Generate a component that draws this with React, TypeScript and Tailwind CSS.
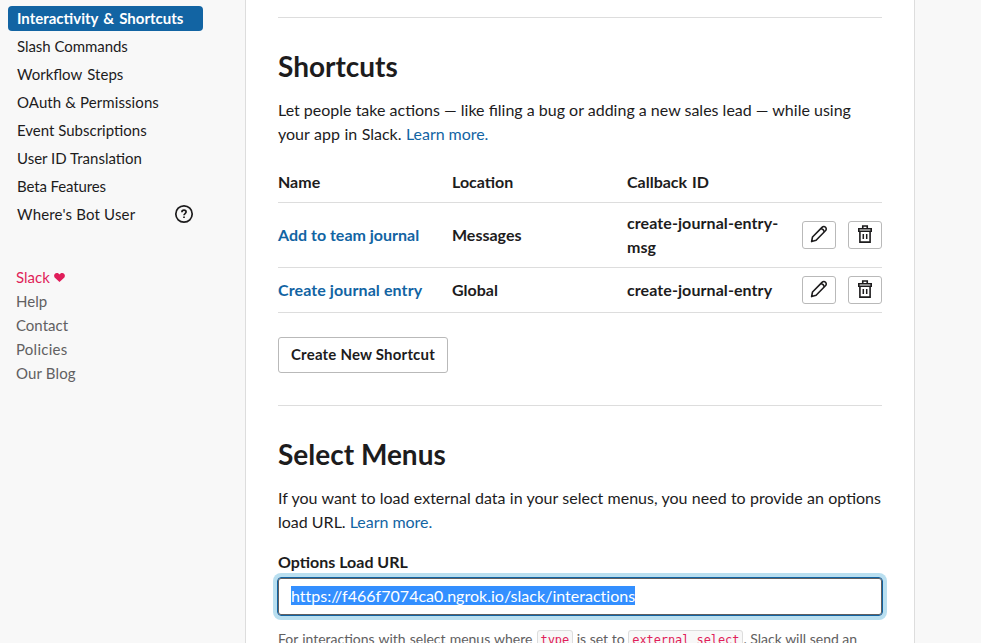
import type { ReactNode } from 'react';

const navItems = [
  { label: 'Slash Commands', style: 'tracking-[-0.05px]' },
  { label: 'Workflow Steps', style: '[word-spacing:1.5px]' },
  { label: 'OAuth & Permissions', style: 'tracking-[0.1px]' },
  { label: 'Event Subscriptions', style: '' },
  { label: 'User ID Translation', style: '' },
  { label: 'Beta Features', style: 'tracking-[-0.12px]' },
];

const footerLinks = [
  { label: 'Help', style: '' },
  { label: 'Contact', style: '' },
  { label: 'Policies', style: 'tracking-[0.25px]' },
  { label: 'Our Blog', style: 'tracking-[0.15px]' },
];

const shortcuts = [
  { name: 'Add to team journal', location: 'Messages', id: 'create-journal-entry-msg', height: 'h-[65px]', style: '' },
  { name: 'Create journal entry', location: 'Global', id: 'create-journal-entry', height: 'h-[45px]', style: 'tracking-[0.1px]' },
];

function HelpIcon() {
  return (
    <svg width="20" height="20" viewBox="0 0 20 20" fill="none" stroke="#1d1c1d" strokeWidth="1.7">
      <circle cx="10" cy="10" r="8.2" />
      <path d="M7.900 8.200c0-1.300 1-2 2.100-2s2.100.7 2.100 1.900c0 1.500-2.100 1.500-2.100 3.200" />
      <path d="M10 12.400v1.700" />
    </svg>
  );
}

function HeartIcon() {
  return (
    <svg width="11" height="9" viewBox="0 0 11 9" fill="#e01e5a">
      <path d="M5.500 9 .6 4.400C-.5 3 .2 0 2.800 0c1.300 0 2.200.7 2.700 1.600C6 .7 6.900 0 8.200 0c2.600 0 3.300 3 2.200 4.400Z" />
    </svg>
  );
}

function PencilIcon() {
  return (
    <svg className="-translate-y-px" width="18" height="18" viewBox="0 0 18 18" fill="none" stroke="#1d1c1d" strokeWidth="1.600" strokeLinejoin="round">
      <path d="M1.600 16.600l.9-4.600L12 2.400c1.200-1.200 2.600-1 3.500-.1.9.9 1.100 2.300-.1 3.500L6.100 15.300Z" />
      <path d="M11 3.500c1.700.4 2.900 1.600 3.300 3.300" />
    </svg>
  );
}

function TrashIcon() {
  return (
    <svg className="-translate-y-px" width="14" height="18" viewBox="0 0 14 18" fill="none" stroke="#1d1c1d" strokeWidth="1.600">
      <path d="M4.750 3.500V1h4.500v2.500M.8 3.750h12.400v2.500H.8ZM1.900 6.500v10.600h10.200V6.500" />
      <path d="M5.300 9v5M8.700 9v5" strokeWidth="1.500" />
    </svg>
  );
}

function IconButton({ label, children }: { label: string; children: ReactNode }) {
  return (
    <button aria-label={label} className="flex h-7 w-[34px] items-center justify-center rounded-[3px] border border-[#b9b9b9] bg-white">
      {children}
    </button>
  );
}

function Code({ children }: { children: ReactNode }) {
  return (
    <code className="rounded-[3px] border border-[#dddddd] bg-[#f8f8f8] px-[3px] pt-[2px] pb-px font-['DejaVu_Sans_Mono',monospace] text-[12px] tracking-[-0.08px] text-[#e01e5a]">
      {children}
    </code>
  );
}

export default function App() {
  return (
    <div className="flex h-[643px] w-[981px] overflow-hidden bg-[#f8f8f8] font-['Lato',sans-serif] text-[#1d1c1d]">
      <aside className="w-[245px] shrink-0 pt-[6px] text-[15px]">
        <nav className="ml-2 w-[195px]">
          <a className="flex h-[25px] items-center rounded bg-[#1264a3] pl-[9px] font-bold text-white [word-spacing:1.5px]">Interactivity &amp; Shortcuts</a>
          <div className="mt-px">
            {navItems.map((item) => (
              <a key={item.label} className={`flex h-7 items-center pl-[9px] ${item.style}`}>{item.label}</a>
            ))}
            <a className="flex h-7 items-center justify-between pr-[9px] pl-[9px] tracking-[0.17px]">
              Where's Bot User
              <HelpIcon />
            </a>
          </div>
        </nav>
        <div className="mt-[37px] ml-4 flex flex-col leading-6 text-[#616061]">
          <a className="flex items-center gap-1 text-[#e01e5a]">Slack <HeartIcon /></a>
          {footerLinks.map((link) => (
            <a key={link.label} className={link.style}>{link.label}</a>
          ))}
        </div>
      </aside>

      <main className="h-[700px] w-[670px] shrink-0 border-x border-[#dddddd] bg-white px-8 pt-[17px] text-[16px] leading-6">
        <hr className="border-[#dddddd]" />
        <h2 className="mt-[31px] text-[28px] leading-[34px] font-bold">Shortcuts</h2>
        <p className="mt-[15px]">
          Let people take actions — like filing a bug or adding a new sales lead — while using<br />
          <span className="[word-spacing:0.4px]">your app in Slack. </span><a className="tracking-[-0.04px] text-[#1264a3]">Learn more.</a>
        </p>

        <div className="mt-6 font-bold">
          <div className="grid h-[33px] grid-cols-[174px_175px_175px_80px] border-b border-[#dddddd]">
            <span>Name</span>
            <span>Location</span>
            <span className="[word-spacing:1px]">Callback ID</span>
          </div>
          {shortcuts.map((row) => (
            <div key={row.name} className={`grid grid-cols-[174px_175px_175px_80px] items-center border-b border-[#dddddd] ${row.height}`}>
              <a className={`text-[#1264a3] ${row.style}`}>{row.name}</a>
              <span>{row.location}</span>
              <span className="w-[155px] tracking-[0.08px]">{row.id}</span>
              <span className="flex gap-3">
                <IconButton label="Edit"><PencilIcon /></IconButton>
                <IconButton label="Delete"><TrashIcon /></IconButton>
              </span>
            </div>
          ))}
        </div>

        <button className="mt-6 flex h-9 w-[170px] items-center justify-center rounded-[3px] border border-[#b9b9b9] pb-[2px] text-[15px] font-bold tracking-[0.2px]">
          Create New Shortcut
        </button>
        <hr className="mt-8 border-[#dddddd]" />
        <h2 className="mt-[31px] text-[28px] leading-[34px] font-bold">Select Menus</h2>
        <p className="mt-[15px] whitespace-nowrap">
          <span className="[word-spacing:0.2px]">If you want to load external data in your select menus, you need to provide an options</span><br />
          load URL. <a className="tracking-[-0.04px] text-[#1264a3]">Learn more.</a>
        </p>
        <div className="mt-4 font-bold">Options Load URL</div>
        <div className="mt-[3px] -mr-px -ml-px flex h-[39px] items-center rounded border border-[#1264a3] pb-[2px] pl-[13px] shadow-[0_0_0_4px_#b9dff0,inset_0_0_0_1px_#616061]">
          <span className="bg-[#338fff] leading-[19px] tracking-[0.02px] text-white">https://f466f7074ca0.ngrok.io/slack/interactions</span>
        </div>
        <p className="mt-[11px] text-[14px] whitespace-nowrap text-[#616061]">
          <span className="[word-spacing:0.5px]">For interactions with select menus where </span><Code>type</Code> is set to <Code>external_select</Code>. Slack will send an
        </p>
      </main>
    </div>
  );
}
